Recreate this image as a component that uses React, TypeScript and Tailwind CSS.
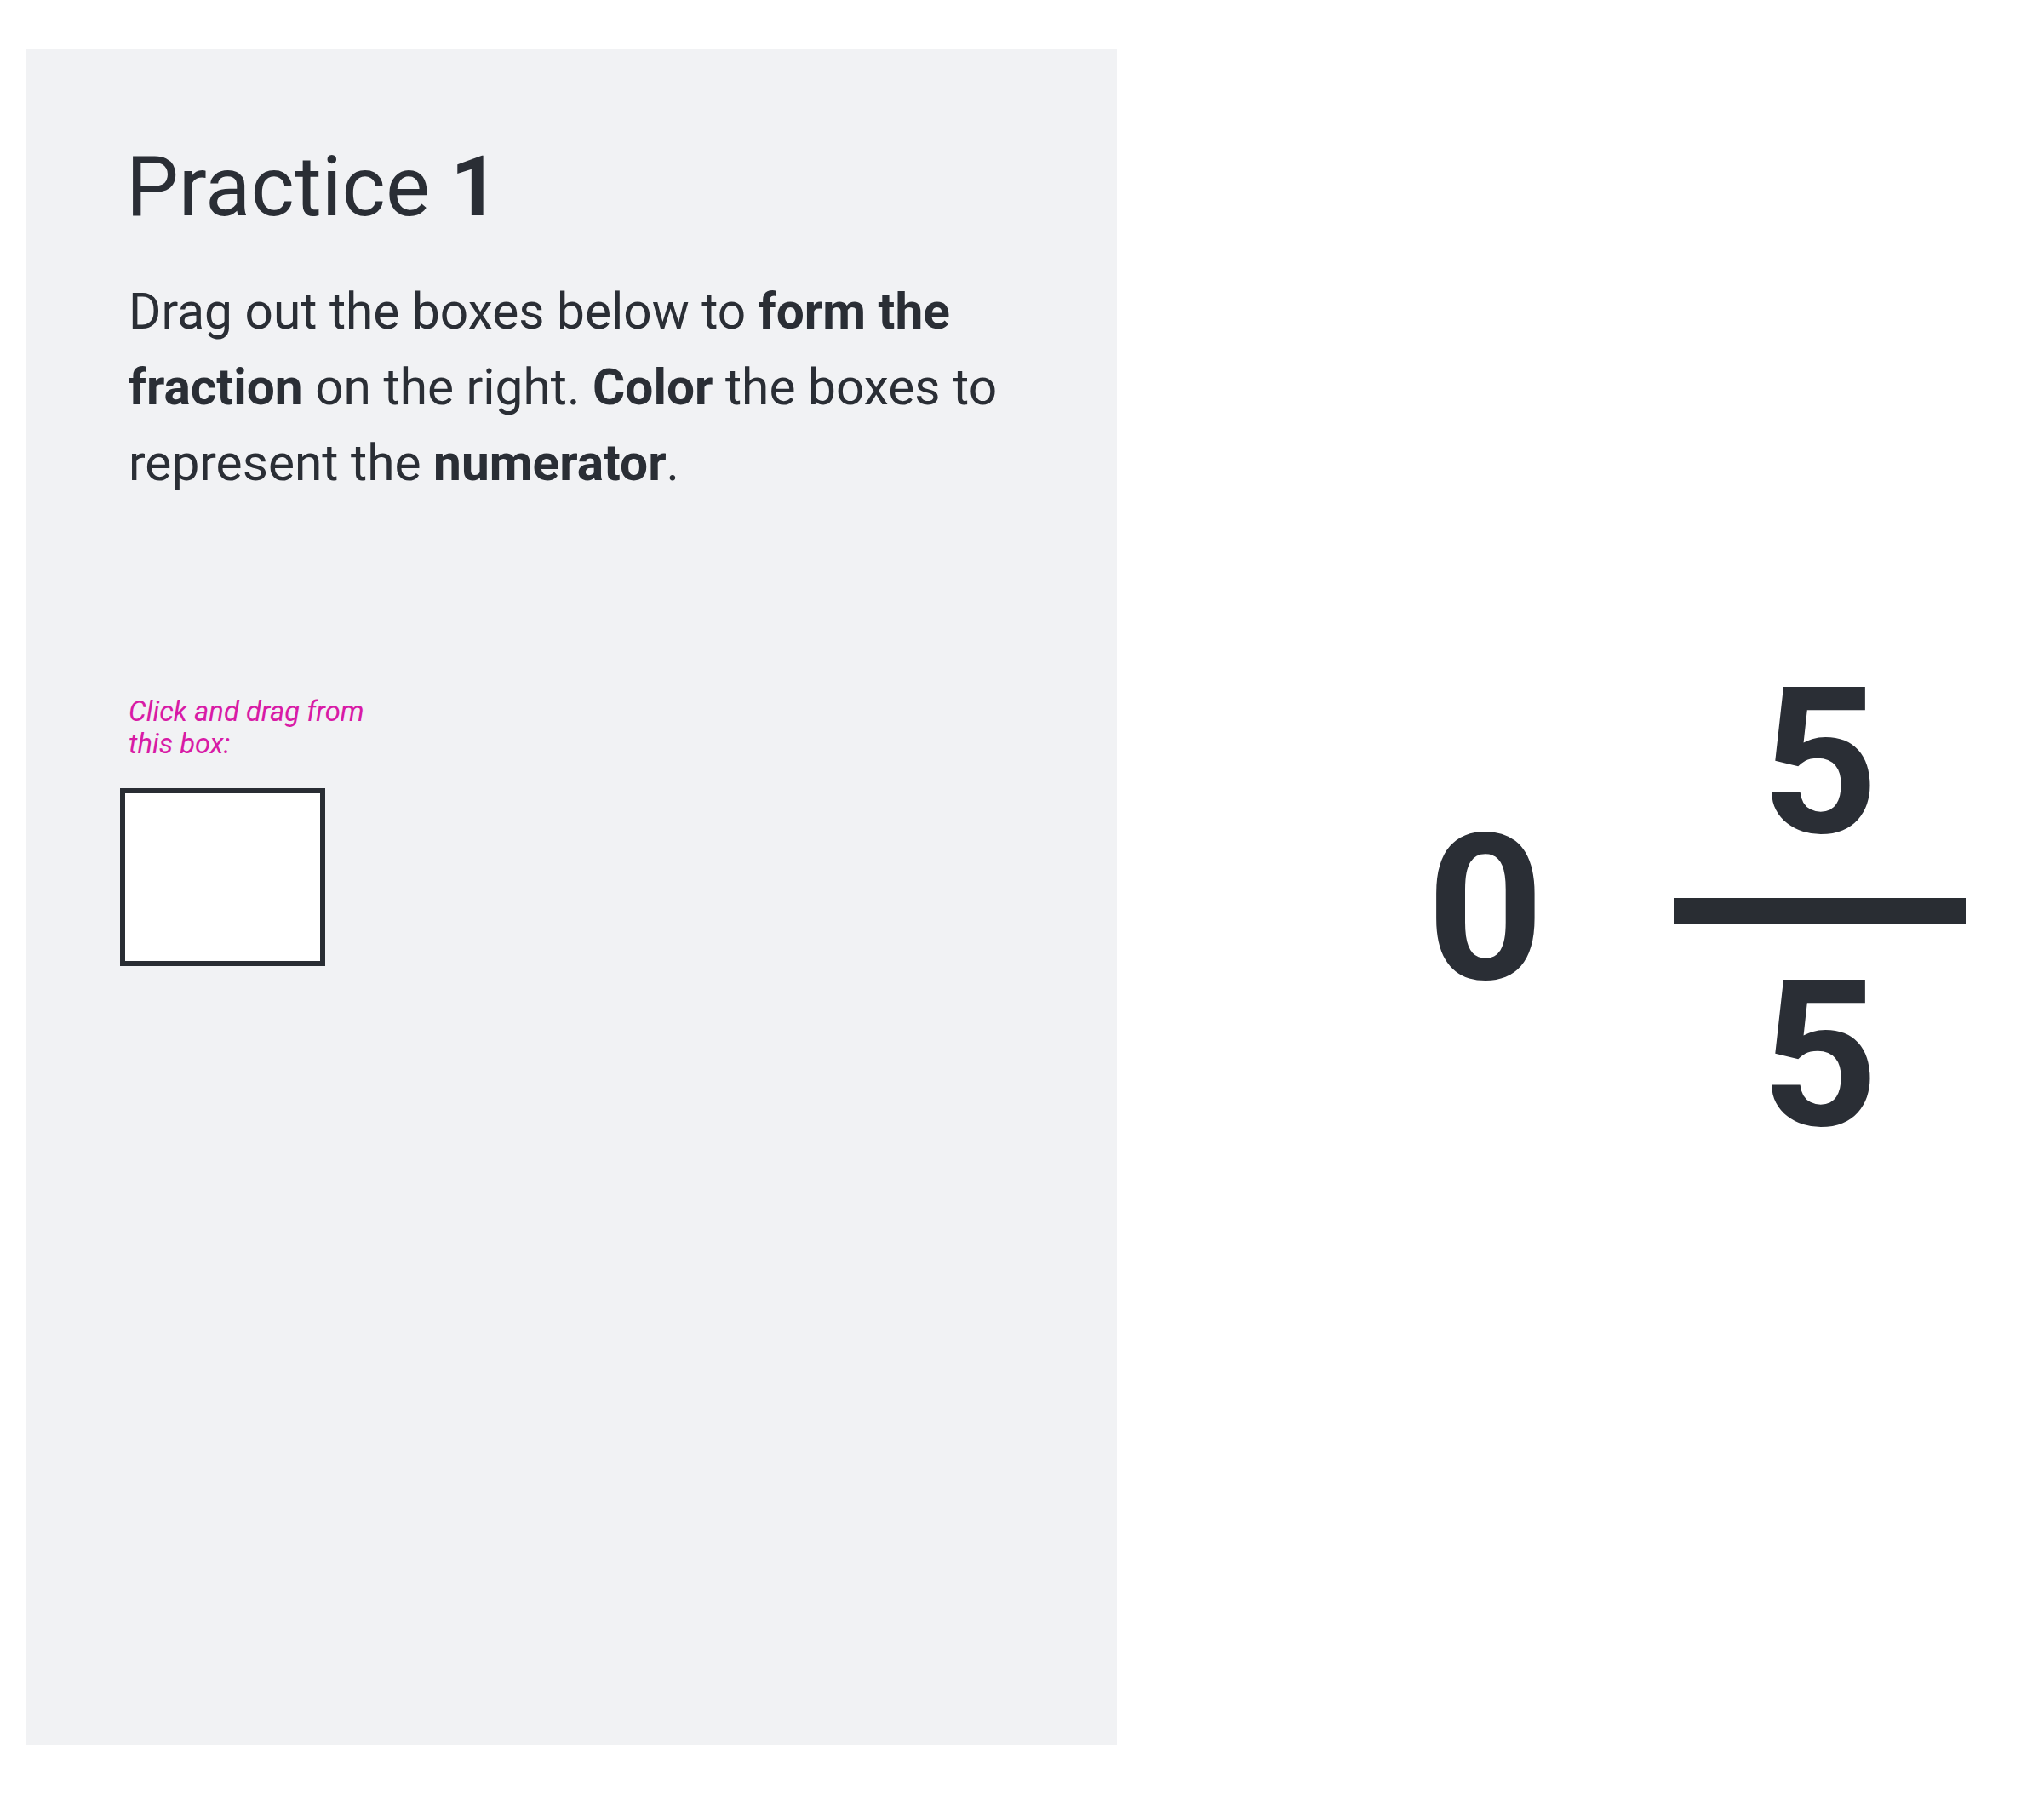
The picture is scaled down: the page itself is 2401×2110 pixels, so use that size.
import React from "react";

export default function App() {
  const font = { fontFamily: "Roboto, 'Noto Sans', sans-serif" };
  return (
    <div className="min-h-[2110px] w-[2401px] bg-white flex text-[#2a2e35]" style={font}>
      <div className="mt-[58px] ml-[31px] w-[1281px] h-[1992px] bg-[#f1f2f4] pl-[120px] pr-[107px] pt-[114px] flex flex-col">
        <h1 className="-ml-[3px] text-[98px] leading-[96px] font-normal m-0 whitespace-nowrap">
          Practice <span className="font-bold">1</span>
        </h1>
        <p className="mt-[54px] text-[58.6px] leading-[89px] font-normal">
          Drag out the boxes below to <b className="font-bold">form the fraction</b> on the right.{" "}
          <b className="font-bold">Color</b> the boxes to represent the <b className="font-bold">numerator</b>.
        </p>
        <div className="mt-[228px] text-[32.8px] leading-[38.4px] italic text-[#d81ba6] w-[320px]">
          Click and drag from
          <br />
          this box:
        </div>
        <div className="mt-[32px] -ml-[10px] w-[241px] h-[209px] border-[6px] border-[#292d33] bg-white" />
      </div>
      <div className="flex-1 flex items-start justify-end pr-[92px] pt-[776px]">
        <div className="flex items-center">
          <div className="text-[240px] leading-[240px] font-bold w-[135px] text-center">0</div>
          <div className="ml-[155px] flex flex-col items-center">
            <div className="text-[240px] leading-[240px] font-bold">5</div>
            <div className="mt-[39px] w-[343px] h-[30px] bg-[#292d33]" />
            <div className="mt-[35px] text-[240px] leading-[240px] font-bold">5</div>
          </div>
        </div>
      </div>
    </div>
  );
}
